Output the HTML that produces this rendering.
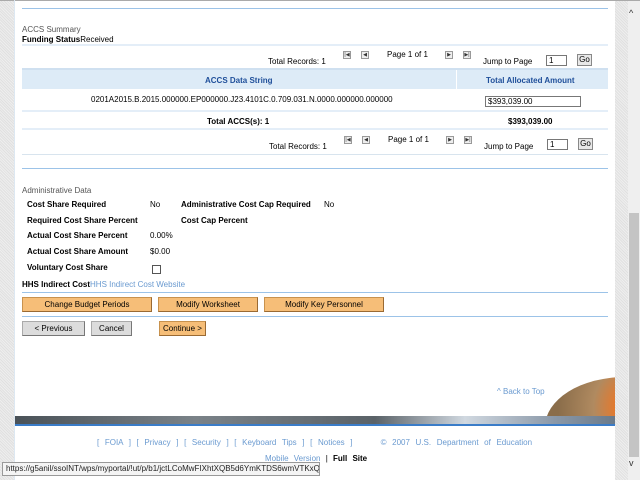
<!DOCTYPE html>
<html><head><meta charset="utf-8"><style>
*{margin:0;padding:0;box-sizing:border-box}
body{width:640px;height:480px;overflow:hidden;position:relative;background:#fff;font-family:"Liberation Sans",Verdana,sans-serif;font-size:8px;color:#000}
.a{position:absolute;white-space:nowrap}
.hatch{background:repeating-linear-gradient(45deg,#eeeeee 0 1px,#e0e0e0 1px 2px)}
.hl{position:absolute;left:22px;width:586px;height:1px;background:#9cc3e8}
.hl2{position:absolute;left:22px;width:586px;height:2px;background:#e4eef8}
.b{font-weight:bold}
.pg{position:absolute;width:8px;height:8px;border:1px solid #999;background:#eee;font-size:5px;line-height:6px;text-align:center;color:#333}
.inp{position:absolute;border:1px solid #777;background:#fff;font-size:8px;padding-left:2px;line-height:9px}
.go{position:absolute;width:15px;height:12px;border:1px solid #888;background:#e8e8e8;font-size:8px;text-align:center;line-height:10px}
.ob{position:absolute;height:15px;background:#f6be78;border:1px solid #c8924e;border-right-color:#9a6a33;border-bottom-color:#9a6a33;text-align:center;line-height:13px;font-size:8px}
.gb{position:absolute;height:15px;background:#dcdcdc;border:1px solid #aaa;border-right-color:#777;border-bottom-color:#777;text-align:center;line-height:13px;font-size:8px}
.lk{color:#6a9ad0}
</style></head><body>
<div class="a hatch" style="left:0;top:0;width:14px;height:480px"></div>
<div class="a hatch" style="left:615px;top:0;width:13px;height:480px"></div>
<div class="a" style="left:0;top:0;width:640px;height:1px;background:#aaa"></div>
<div class="a" style="left:14px;top:0;width:1px;height:480px;background:#dde8f2"></div>
<div class="a" style="left:628px;top:1px;width:12px;height:479px;background:#efefef"></div>
<div class="a" style="left:629px;top:213px;width:10px;height:244px;background:#c4c4c4"></div>
<div class="a" style="left:629px;top:8px;font-size:9px;color:#333">^</div>
<div class="a" style="left:629px;top:458px;font-size:9px;color:#333">v</div>

<div class="hl" style="top:8px"></div>
<div class="a" style="left:22px;top:25px;color:#555">ACCS Summary</div>
<div class="a" style="left:22px;top:35px"><b>Funding Status</b>Received</div>
<div class="hl2" style="top:44px"></div>
<div class="a" style="left:268px;top:57px">Total Records: 1</div>
<div class="pg" style="left:343px;top:51px">|◀</div>
<div class="pg" style="left:361px;top:51px">◀</div>
<div class="a" style="left:387px;top:50px">Page 1 of 1</div>
<div class="pg" style="left:445px;top:51px">▶</div>
<div class="pg" style="left:463px;top:51px">▶|</div>
<div class="a" style="left:483px;top:57px">Jump to Page</div>
<div class="inp" style="left:546px;top:55px;width:21px;height:11px">1</div>
<div class="go" style="left:577px;top:54px">Go</div>
<div class="a" style="left:22px;top:68px;width:586px;height:21px;background:#ddebf7;border-top:2px solid #cfe0f0"></div>
<div class="a" style="left:456px;top:70px;width:1px;height:19px;background:#fff"></div>
<div class="a b" style="left:205px;top:76px;color:#1f4f9a">ACCS Data String</div>
<div class="a b" style="left:486px;top:76px;color:#1f4f9a">Total Allocated Amount</div>
<div class="a" style="left:91px;top:95px">0201A2015.B.2015.000000.EP000000.J23.4101C.0.709.031.N.0000.000000.000000</div>
<div class="inp" style="left:485px;top:96px;width:96px;height:11px">$393,039.00</div>
<div class="hl2" style="top:110px"></div>
<div class="a b" style="left:207px;top:117px">Total ACCS(s): 1</div>
<div class="a b" style="left:508px;top:117px">$393,039.00</div>
<div class="hl2" style="top:128px"></div>
<div class="a" style="left:269px;top:142px">Total Records: 1</div>
<div class="pg" style="left:344px;top:136px">|◀</div>
<div class="pg" style="left:362px;top:136px">◀</div>
<div class="a" style="left:388px;top:135px">Page 1 of 1</div>
<div class="pg" style="left:446px;top:136px">▶</div>
<div class="pg" style="left:464px;top:136px">▶|</div>
<div class="a" style="left:484px;top:142px">Jump to Page</div>
<div class="inp" style="left:547px;top:139px;width:21px;height:11px">1</div>
<div class="go" style="left:578px;top:138px">Go</div>
<div class="a" style="left:22px;top:154px;width:586px;height:1px;background:#d8e4ee"></div>
<div class="hl" style="top:168px"></div>

<div class="a" style="left:22px;top:186px;color:#555">Administrative Data</div>
<div class="a b" style="left:27px;top:200px">Cost Share Required</div>
<div class="a" style="left:150px;top:200px">No</div>
<div class="a b" style="left:181px;top:200px">Administrative Cost Cap Required</div>
<div class="a" style="left:324px;top:200px">No</div>
<div class="a b" style="left:27px;top:216px">Required Cost Share Percent</div>
<div class="a b" style="left:181px;top:216px">Cost Cap Percent</div>
<div class="a b" style="left:27px;top:231px">Actual Cost Share Percent</div>
<div class="a" style="left:150px;top:231px">0.00%</div>
<div class="a b" style="left:27px;top:247px">Actual Cost Share Amount</div>
<div class="a" style="left:150px;top:247px">$0.00</div>
<div class="a b" style="left:27px;top:263px">Voluntary Cost Share</div>
<div class="a" style="left:152px;top:265px;width:9px;height:9px;border:1px solid #555;background:#fff"></div>
<div class="a" style="left:22px;top:280px"><b>HHS Indirect Cost</b><span class="lk">HHS Indirect Cost Website</span></div>
<div class="hl" style="top:292px"></div>
<div class="ob" style="left:22px;top:297px;width:130px">Change Budget Periods</div>
<div class="ob" style="left:158px;top:297px;width:100px">Modify Worksheet</div>
<div class="ob" style="left:264px;top:297px;width:120px">Modify Key Personnel</div>
<div class="hl" style="top:316px"></div>
<div class="gb" style="left:22px;top:321px;width:63px">&lt; Previous</div>
<div class="gb" style="left:91px;top:321px;width:41px">Cancel</div>
<div class="ob" style="left:159px;top:321px;width:47px">Continue &gt;</div>

<div class="a lk" style="left:497px;top:387px">^ Back to Top</div>
<div class="a" style="left:545px;top:377px;width:70px;height:40px;overflow:hidden"><div style="position:absolute;left:0;top:0;width:160px;height:100px;border-radius:50%;background:radial-gradient(circle at 60% 30%,#e8782a 0 20%,#b08a60 40%,#8a6d4a 70%);"></div></div>
<div class="a" style="left:15px;top:416px;width:600px;height:8px;background:linear-gradient(90deg,#4a5258,#7a8288 30%,#5a6268 60%,#d0d8e0 75%,#8a98a8 90%,#6a7a8a)"></div>
<div class="a" style="left:15px;top:424px;width:600px;height:2px;background:#3a7cc8"></div>
<div class="a lk" style="left:97px;top:438px;word-spacing:3.4px">[ FOIA ] [ Privacy ] [ Security ] [ Keyboard Tips ] [ Notices ] &nbsp; &nbsp; © 2007 U.S. Department of Education</div>
<div class="a" style="left:265px;top:454px;word-spacing:3px"><span class="lk">Mobile Version</span> | <b>Full Site</b></div>
<div class="a" style="left:2px;top:462px;width:318px;height:14px;background:#f4f4f4;border:1px solid #999;font-size:8px;line-height:12px;padding-left:3px;color:#222;overflow:hidden">https://g5anil/ssoINT/wps/myportal/!ut/p/b1/jctLCoMwFIXhtXQB5d6YmKTDS6wmVTKxQp...</div>
</body></html>
